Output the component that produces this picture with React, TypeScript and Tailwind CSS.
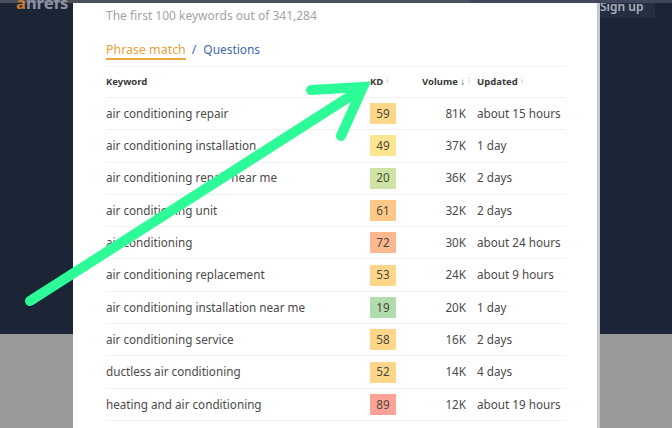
const rows = [
  { keyword: 'air conditioning repair', kd: 59, color: 'bg-[#fdd68a]', volume: '81K', updated: 'about 15 hours' },
  { keyword: 'air conditioning installation', kd: 49, color: 'bg-[#fde58f]', volume: '37K', updated: '1 day' },
  { keyword: 'air conditioning repair near me', kd: 20, color: 'bg-[#cfe3a5]', volume: '36K', updated: '2 days' },
  { keyword: 'air conditioning unit', kd: 61, color: 'bg-[#fdc788]', volume: '32K', updated: '2 days' },
  { keyword: 'air conditioning', kd: 72, color: 'bg-[#fdb78f]', volume: '30K', updated: 'about 24 hours' },
  { keyword: 'air conditioning replacement', kd: 53, color: 'bg-[#fdd68a]', volume: '24K', updated: 'about 9 hours' },
  { keyword: 'air conditioning installation near me', kd: 19, color: 'bg-[#b1dcae]', volume: '20K', updated: '1 day' },
  { keyword: 'air conditioning service', kd: 58, color: 'bg-[#fdd68a]', volume: '16K', updated: '2 days' },
  { keyword: 'ductless air conditioning', kd: 52, color: 'bg-[#fdd68a]', volume: '14K', updated: '4 days' },
  { keyword: 'heating and air conditioning', kd: 89, color: 'bg-[#fca297]', volume: '12K', updated: 'about 19 hours' },
]

function SortDots() {
  return <span className="ml-[3px] text-[7px] leading-none text-[#bbbbbb] -translate-y-[2px]">⁝</span>
}

export default function App() {
  return (
    <div className="relative h-[428px] w-[672px] overflow-hidden bg-[#999999] font-['Noto_Sans','Liberation_Sans',sans-serif]">
      {/* page behind the modal */}
      <div className="h-[334px] bg-[#1c2536]">
        <div className="flex h-[3px]">
          <div className="w-[470px] bg-[#4a4f5c]" />
          <div className="flex-1 bg-[#3d465a]" />
        </div>
        <div className="flex items-start justify-between">
          <div className="-mt-[9px] ml-[16px] text-[16.5px] font-bold leading-[17px] text-[#8b93a3]">
            <span className="text-[#c97a2c]">a</span>hrefs
          </div>
          <div className="mr-[17px] h-[15px] w-[60px] overflow-hidden bg-[#262f42] pl-[5px] text-[12px] font-semibold leading-[8px] text-[#a9afbb]">
            Sign up
          </div>
        </div>
      </div>

      {/* modal */}
      <div className="absolute bottom-0 left-[73px] top-[3px] w-[527px] border-r-[3px] border-[#c4c6ca] bg-white pl-[33px] pr-[31px]">
        <p className="pt-[3px] text-[12px] leading-[19px] text-[#a3a3a3]">The first 100 keywords out of 341,284</p>
        <div className="mt-[17px] flex h-[24px] items-start text-[12.4px]">
          <span className="box-content h-[16px] border-b-2 border-[#e9a745] leading-[15px] text-[#e9a03a]">Phrase match</span>
          <span className="ml-[6px] leading-[15px] text-[#3b68b5]">/</span>
          <span className="ml-[7px] text-[11.9px] leading-[15px] text-[#3b68b5]">Questions</span>
        </div>
        <div className="flex h-[32px] items-center border-y border-[#f0f0f0] pt-[1px] text-[9.5px] font-bold text-[#3a3a3a]">
          <div className="w-[264px]">Keyword</div>
          <div className="flex w-[52px] items-center">KD<SortDots /></div>
          <div className="flex w-[51px] items-center whitespace-nowrap">Volume ↓<SortDots /></div>
          <div className="ml-[4px] flex items-center">Updated<SortDots /></div>
        </div>
        {rows.map((row) => (
          <div key={row.keyword} className="flex h-[32.3px] items-center border-b border-[#f0f0f0] text-[11.7px] text-[#4a4a4a]">
            <div className="w-[264px] whitespace-nowrap">{row.keyword}</div>
            <div className="w-[26px]">
              <div className={`flex h-[21px] items-center justify-center text-[#4d4a3a] ${row.color}`}>{row.kd}</div>
            </div>
            <div className="w-[70px] text-right">{row.volume}</div>
            <div className="ml-[11px] whitespace-nowrap">{row.updated}</div>
          </div>
        ))}
      </div>

      {/* green annotation arrow */}
      <svg className="absolute inset-0" width="672" height="428" viewBox="0 0 672 428" fill="none">
        <path d="M30 301 L360 90 M311 90 L363 87 L341 136" stroke="#2cfb98" strokeWidth="10" strokeLinecap="round" strokeLinejoin="miter" />
      </svg>
    </div>
  )
}
